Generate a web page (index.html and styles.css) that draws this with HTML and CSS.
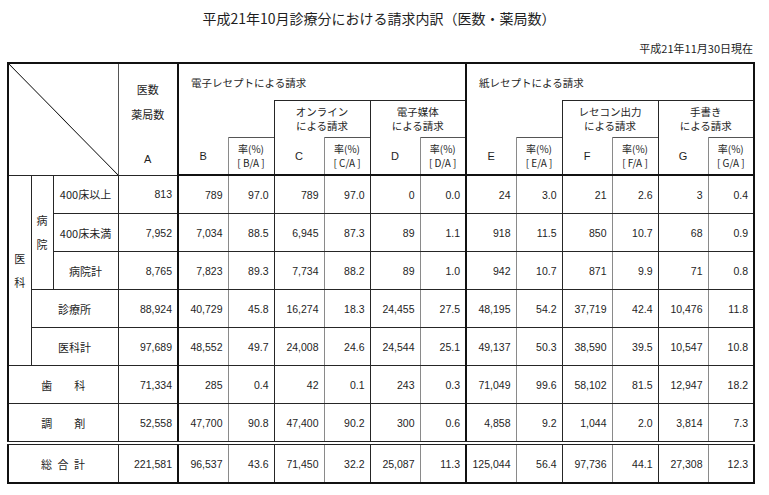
FILE: index.html
```html
<!DOCTYPE html>
<html lang="ja">
<head>
<meta charset="utf-8">
<title>請求内訳</title>
<link rel="stylesheet" href="styles.css">
</head>
<body>
<div class="page">
  <h1 class="title">平成21年10月診療分における請求内訳（医数・薬局数）</h1>
  <div class="asof">平成21年11月30日現在</div>
  <table class="tbl">
    <colgroup>
      <col class="c1"><col class="c2"><col class="c3"><col class="ca">
      <col class="cv"><col class="cr"><col class="cv"><col class="cr"><col class="cv"><col class="cr">
      <col class="cv"><col class="cr"><col class="cv"><col class="cr"><col class="cv"><col class="cr">
    </colgroup>
    <thead>
      <tr class="h1">
        <th class="diag" colspan="3" rowspan="3"></th>
        <th class="acol" rowspan="3">
          <div class="astack"><span class="a1">医数</span><span class="a2">薬局数</span><span class="a3">A</span></div>
        </th>
        <th class="grp g" colspan="6">電子レセプトによる請求</th>
        <th class="grp g" colspan="6">紙レセプトによる請求</th>
      </tr>
      <tr class="h2">
        <th class="blank g" colspan="2"></th>
        <th class="box" colspan="2"><span class="bl">オンライン</span><span class="bl">による請求</span></th>
        <th class="box" colspan="2"><span class="bl">電子媒体</span><span class="bl">による請求</span></th>
        <th class="blank g" colspan="2"></th>
        <th class="box" colspan="2"><span class="bl">レセコン出力</span><span class="bl">による請求</span></th>
        <th class="box" colspan="2"><span class="bl">手書き</span><span class="bl">による請求</span></th>
      </tr>
      <tr class="h3">
        <th class="hv v g nt">B</th><th class="hr r"><span class="rl">率(%)</span><span class="rl">[ B/A ]</span></th>
        <th class="hv v">C</th><th class="hr r"><span class="rl">率(%)</span><span class="rl">[ C/A ]</span></th>
        <th class="hv v">D</th><th class="hr r"><span class="rl">率(%)</span><span class="rl">[ D/A ]</span></th>
        <th class="hv v g nt">E</th><th class="hr r"><span class="rl">率(%)</span><span class="rl">[ E/A ]</span></th>
        <th class="hv v">F</th><th class="hr r"><span class="rl">率(%)</span><span class="rl">[ F/A ]</span></th>
        <th class="hv v">G</th><th class="hr r"><span class="rl">率(%)</span><span class="rl">[ G/A ]</span></th>
      </tr>
    </thead>
    <tbody>
      <tr class="first">
        <td class="lab vert" rowspan="5">医<br>科</td>
        <td class="lab vert" rowspan="3">病<br>院</td>
        <td class="lab">400床以上</td>
        <td class="n">813</td>
        <td class="n v g">789</td><td class="n r">97.0</td>
        <td class="n v">789</td><td class="n r">97.0</td>
        <td class="n v">0</td><td class="n r">0.0</td>
        <td class="n v g">24</td><td class="n r">3.0</td>
        <td class="n v">21</td><td class="n r">2.6</td>
        <td class="n v">3</td><td class="n r">0.4</td>
      </tr>
      <tr>
        <td class="lab">400床未満</td>
        <td class="n">7,952</td>
        <td class="n v g">7,034</td><td class="n r">88.5</td>
        <td class="n v">6,945</td><td class="n r">87.3</td>
        <td class="n v">89</td><td class="n r">1.1</td>
        <td class="n v g">918</td><td class="n r">11.5</td>
        <td class="n v">850</td><td class="n r">10.7</td>
        <td class="n v">68</td><td class="n r">0.9</td>
      </tr>
      <tr>
        <td class="lab">病院計</td>
        <td class="n">8,765</td>
        <td class="n v g">7,823</td><td class="n r">89.3</td>
        <td class="n v">7,734</td><td class="n r">88.2</td>
        <td class="n v">89</td><td class="n r">1.0</td>
        <td class="n v g">942</td><td class="n r">10.7</td>
        <td class="n v">871</td><td class="n r">9.9</td>
        <td class="n v">71</td><td class="n r">0.8</td>
      </tr>
      <tr>
        <td class="lab" colspan="2">診療所</td>
        <td class="n">88,924</td>
        <td class="n v g">40,729</td><td class="n r">45.8</td>
        <td class="n v">16,274</td><td class="n r">18.3</td>
        <td class="n v">24,455</td><td class="n r">27.5</td>
        <td class="n v g">48,195</td><td class="n r">54.2</td>
        <td class="n v">37,719</td><td class="n r">42.4</td>
        <td class="n v">10,476</td><td class="n r">11.8</td>
      </tr>
      <tr>
        <td class="lab" colspan="2">医科計</td>
        <td class="n">97,689</td>
        <td class="n v g">48,552</td><td class="n r">49.7</td>
        <td class="n v">24,008</td><td class="n r">24.6</td>
        <td class="n v">24,544</td><td class="n r">25.1</td>
        <td class="n v g">49,137</td><td class="n r">50.3</td>
        <td class="n v">38,590</td><td class="n r">39.5</td>
        <td class="n v">10,547</td><td class="n r">10.8</td>
      </tr>
      <tr>
        <td class="lab" colspan="3">歯　　科</td>
        <td class="n">71,334</td>
        <td class="n v g">285</td><td class="n r">0.4</td>
        <td class="n v">42</td><td class="n r">0.1</td>
        <td class="n v">243</td><td class="n r">0.3</td>
        <td class="n v g">71,049</td><td class="n r">99.6</td>
        <td class="n v">58,102</td><td class="n r">81.5</td>
        <td class="n v">12,947</td><td class="n r">18.2</td>
      </tr>
      <tr>
        <td class="lab" colspan="3">調　　剤</td>
        <td class="n">52,558</td>
        <td class="n v g">47,700</td><td class="n r">90.8</td>
        <td class="n v">47,400</td><td class="n r">90.2</td>
        <td class="n v">300</td><td class="n r">0.6</td>
        <td class="n v g">4,858</td><td class="n r">9.2</td>
        <td class="n v">1,044</td><td class="n r">2.0</td>
        <td class="n v">3,814</td><td class="n r">7.3</td>
      </tr>
      <tr class="total">
        <td class="lab spaced" colspan="3">総合計</td>
        <td class="n">221,581</td>
        <td class="n v g">96,537</td><td class="n r">43.6</td>
        <td class="n v">71,450</td><td class="n r">32.2</td>
        <td class="n v">25,087</td><td class="n r">11.3</td>
        <td class="n v g">125,044</td><td class="n r">56.4</td>
        <td class="n v">97,736</td><td class="n r">44.1</td>
        <td class="n v">27,308</td><td class="n r">12.3</td>
      </tr>
    </tbody>
  </table>
</div>
</body>
</html>
```
FILE: styles.css
```css
html, body {
  margin: 0;
  padding: 0;
  background: #ffffff;
}
body {
  font-family: "Noto Sans CJK JP", "Liberation Sans", sans-serif;
  color: #1e1e1e;
}
.page {
  padding-left: 7px;
  width: 748px;
}
.title {
  margin: 0;
  font-size: 14px;
  font-weight: normal;
  line-height: 36px;
  height: 36px;
  text-align: center;
  padding-right: 4px;
}
.asof {
  font-size: 11px;
  line-height: 14px;
  margin-top: 5px;
  text-align: right;
  padding-right: 2px;
}
.tbl {
  margin-top: 7px;
  width: 746px;
  table-layout: fixed;
  border-collapse: collapse;
  border: 2px solid #111;
  font-size: 11px;
}
.c1 { width: 23px; }
.c2 { width: 22px; }
.c3 { width: 65px; }
.ca { width: 60px; }
.cv { width: 50px; }
.cr { width: 46px; }

.tbl th, .tbl td {
  border: 1px solid #262626;
  padding: 0;
  font-weight: normal;
}
.h1 th { height: 36px; }
.h2 th { height: 36px; }
.h3 th { height: 36px; }

.diag {
  background: linear-gradient(to top right, transparent calc(50% - 0.8px), #1a1a1a 50%, transparent calc(50% + 0.8px));
  border-right-color: #555 !important;
}
.acol {
  vertical-align: top;
}
.astack {
  display: flex;
  flex-direction: column;
  align-items: center;
  font-size: 11px;
  line-height: 14px;
}
.a1 { margin-top: 18px; }
.a2 { margin-top: 11px; }
.a3 { margin-top: 31px; font-family: "Liberation Sans", sans-serif; }

.g { border-left: 2px solid #111 !important; }

.grp {
  text-align: left;
  padding-left: 12px !important;
  font-size: 10.5px;
  border-bottom: none !important;
}
.blank {
  border-top: none !important;
  border-bottom: none !important;
}
.box {
  font-size: 10.5px;
  vertical-align: middle;
  border-bottom: none !important;
}
.bl {
  display: block;
  line-height: 14px;
  height: 14px;
  white-space: nowrap;
}
.hv {
  font-family: "Liberation Sans", sans-serif;
  font-size: 11px;
  border-top: none !important;
}
.hr {
  font-size: 10px;
  border-top: 1px solid #555 !important;
}
.rl {
  display: block;
  line-height: 14px;
  height: 14px;
  white-space: nowrap;
}
.h3 th { border-bottom: 2px solid #111; }

.v { border-right: 1px solid #8a8a8a !important; }
.r { border-left: 1px solid #8a8a8a !important; }

tbody td { height: 37px; }
.n {
  font-family: "Liberation Sans", sans-serif;
  font-size: 10.5px;
  text-align: right;
  padding-right: 5px !important;
}
.lab {
  text-align: center;
  font-size: 11px;
}
.vert {
  line-height: 24px;
}
.spaced {
  letter-spacing: 5.5px;
  padding-left: 5px !important;
}
.total td {
  border-top: 4px double #222;
}
```
